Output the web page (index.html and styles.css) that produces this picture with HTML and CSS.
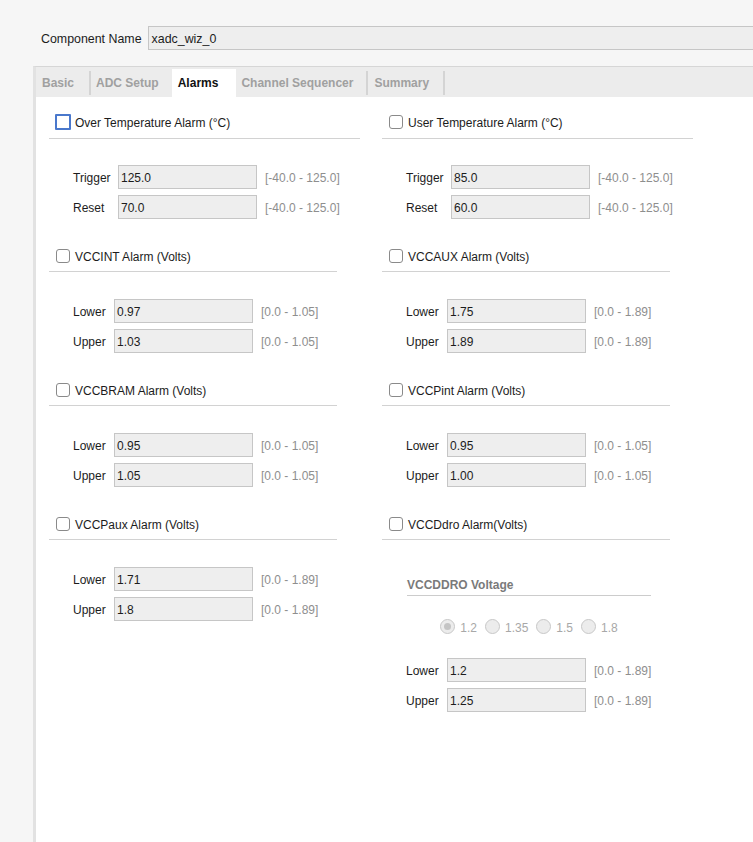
FILE: index.html
```html
<!DOCTYPE html>
<html>
<head>
<meta charset="utf-8">
<link rel="stylesheet" href="styles.css">
</head>
<body>
<div class="top">
  <span class="top-label">Component Name</span>
  <div class="top-input">xadc_wiz_0</div>
</div>
<div class="panel">
  <div class="tabs">
    <div class="tab">Basic</div>
    <div class="divider"></div>
    <div class="tab tab-adc">ADC Setup</div>
    <div class="tab tab-active">Alarms</div>
    <div class="tab tab-cs">Channel Sequencer</div>
    <div class="divider"></div>
    <div class="tab tab-sum">Summary</div>
    <div class="divider"></div>
  </div>
  <div class="content">
    <div class="sec">
      <div class="sec-head"><span class="cb cb-focus"></span><span class="htext">Over Temperature Alarm (°C)</span></div>
      <div class="sep sep-wide"></div>
      <div class="fields fields-temp">
        <div class="field"><span class="flabel">Trigger</span><div class="finput">125.0</div><span class="range">[-40.0 - 125.0]</span></div>
        <div class="field"><span class="flabel">Reset</span><div class="finput">70.0</div><span class="range">[-40.0 - 125.0]</span></div>
      </div>
    </div>
    <div class="sec">
      <div class="sec-head"><span class="cb"></span><span class="htext">User Temperature Alarm (°C)</span></div>
      <div class="sep sep-wide"></div>
      <div class="fields fields-temp">
        <div class="field"><span class="flabel">Trigger</span><div class="finput">85.0</div><span class="range">[-40.0 - 125.0]</span></div>
        <div class="field"><span class="flabel">Reset</span><div class="finput">60.0</div><span class="range">[-40.0 - 125.0]</span></div>
      </div>
    </div>

    <div class="sec">
      <div class="sec-head"><span class="cb"></span><span class="htext">VCCINT Alarm (Volts)</span></div>
      <div class="sep"></div>
      <div class="fields">
        <div class="field"><span class="flabel">Lower</span><div class="finput">0.97</div><span class="range">[0.0 - 1.05]</span></div>
        <div class="field"><span class="flabel">Upper</span><div class="finput">1.03</div><span class="range">[0.0 - 1.05]</span></div>
      </div>
    </div>
    <div class="sec">
      <div class="sec-head"><span class="cb"></span><span class="htext">VCCAUX Alarm (Volts)</span></div>
      <div class="sep"></div>
      <div class="fields">
        <div class="field"><span class="flabel">Lower</span><div class="finput">1.75</div><span class="range">[0.0 - 1.89]</span></div>
        <div class="field"><span class="flabel">Upper</span><div class="finput">1.89</div><span class="range">[0.0 - 1.89]</span></div>
      </div>
    </div>

    <div class="sec">
      <div class="sec-head"><span class="cb"></span><span class="htext">VCCBRAM Alarm (Volts)</span></div>
      <div class="sep"></div>
      <div class="fields">
        <div class="field"><span class="flabel">Lower</span><div class="finput">0.95</div><span class="range">[0.0 - 1.05]</span></div>
        <div class="field"><span class="flabel">Upper</span><div class="finput">1.05</div><span class="range">[0.0 - 1.05]</span></div>
      </div>
    </div>
    <div class="sec">
      <div class="sec-head"><span class="cb"></span><span class="htext">VCCPint Alarm (Volts)</span></div>
      <div class="sep"></div>
      <div class="fields">
        <div class="field"><span class="flabel">Lower</span><div class="finput">0.95</div><span class="range">[0.0 - 1.05]</span></div>
        <div class="field"><span class="flabel">Upper</span><div class="finput">1.00</div><span class="range">[0.0 - 1.05]</span></div>
      </div>
    </div>

    <div class="sec">
      <div class="sec-head"><span class="cb"></span><span class="htext">VCCPaux Alarm (Volts)</span></div>
      <div class="sep"></div>
      <div class="fields">
        <div class="field"><span class="flabel">Lower</span><div class="finput">1.71</div><span class="range">[0.0 - 1.89]</span></div>
        <div class="field"><span class="flabel">Upper</span><div class="finput">1.8</div><span class="range">[0.0 - 1.89]</span></div>
      </div>
    </div>
    <div class="sec">
      <div class="sec-head"><span class="cb"></span><span class="htext">VCCDdro Alarm(Volts)</span></div>
      <div class="sep"></div>
      <div class="sub">
        <div class="sub-title">VCCDDRO Voltage</div>
        <div class="radios">
          <span class="radio radio-on"></span><span class="rlabel">1.2</span>
          <span class="radio"></span><span class="rlabel">1.35</span>
          <span class="radio"></span><span class="rlabel">1.5</span>
          <span class="radio"></span><span class="rlabel">1.8</span>
        </div>
        <div class="fields fields-sub">
          <div class="field"><span class="flabel">Lower</span><div class="finput">1.2</div><span class="range">[0.0 - 1.89]</span></div>
          <div class="field"><span class="flabel">Upper</span><div class="finput">1.25</div><span class="range">[0.0 - 1.89]</span></div>
        </div>
      </div>
    </div>
  </div>
</div>
</body>
</html>
```

FILE: styles.css
```css
html, body {
  margin: 0;
  padding: 0;
}
body {
  background: #f6f6f6;
  font-family: "Liberation Sans", Arial, sans-serif;
  font-size: 12px;
  color: #1c1c1c;
  width: 753px;
  height: 842px;
  overflow: hidden;
}
.top {
  display: flex;
  align-items: center;
  gap: 6px;
  padding: 26px 0 0 41px;
}
.top-label {
  font-size: 12.4px;
  padding-top: 2px;
}
.top-input {
  flex: 1;
  height: 22px;
  line-height: 24px;
  background: #eeeeee;
  border: 1px solid #c6c6c6;
  border-right: none;
  padding-left: 3px;
  font-size: 12.4px;
}
.panel {
  margin: 16px 0 0 33px;
  border-left: 3px solid #e2e2e2;
  border-top: 1px solid #d6d6d6;
  background: #ffffff;
  height: 780px;
}
.tabs {
  display: flex;
  align-items: flex-end;
  height: 30px;
  background: #ececec;
}
.tab {
  height: 28px;
  line-height: 29px;
  padding: 0 15px 0 6px;
  font-weight: bold;
  color: #a0a0a0;
}
.tab-adc {
  padding-left: 5px;
  padding-right: 13px;
}
.tab-active {
  background: #ffffff;
  color: #111111;
  padding-right: 18px;
}
.tab-cs {
  padding-left: 5px;
  padding-right: 13px;
}
.tab-sum {
  padding-left: 6px;
  padding-right: 14px;
}
.divider {
  width: 2px;
  height: 24px;
  background: #d4d4d4;
  align-self: center;
  margin-top: 2px;
}
.content {
  display: grid;
  grid-template-columns: 333px 333px;
  padding: 15px 0 0 13px;
}
.sec {
  margin-bottom: 27px;
}
.sec-head {
  display: flex;
  align-items: center;
  gap: 5px;
  height: 20px;
  padding-left: 7px;
}
.htext {
  padding-top: 2px;
}
.cb {
  width: 12px;
  height: 12px;
  border: 1px solid #8a8a8a;
  border-radius: 3px;
  background: #ffffff;
  flex: none;
}
.cb-focus {
  width: 12px;
  height: 12px;
  border: 2px solid #4a78cc;
  border-radius: 1px;
  margin-left: -1px;
  margin-right: -1px;
}
.sep {
  height: 1px;
  background: #d2d2d2;
  margin-top: 5px;
  width: 288px;
}
.sep-wide {
  width: 311px;
  margin-top: 6px;
}
.fields {
  display: flex;
  flex-direction: column;
  gap: 6px;
  margin-top: 27px;
  padding-left: 24px;
}
.fields-temp {
  margin-top: 26px;
}
.field {
  display: flex;
  align-items: center;
  height: 24px;
}
.flabel {
  width: 41px;
  flex: none;
  padding-top: 2px;
}
.fields-temp .flabel {
  width: 45px;
}
.finput {
  width: 135px;
  height: 22px;
  line-height: 24px;
  background: #eeeeee;
  border: 1px solid #c6c6c6;
  padding-left: 2px;
  flex: none;
}
.range {
  margin-left: 8px;
  color: #8e8e8e;
  padding-top: 2px;
}
.sub {
  padding-left: 24px;
  margin-top: 37px;
}
.sub-title {
  width: 244px;
  margin-left: 1px;
  font-weight: bold;
  color: #7a7a7a;
  line-height: 16px;
  padding-bottom: 2px;
  border-bottom: 1px solid #cccccc;
}
.radios {
  width: 244px;
  margin-left: 1px;
  margin-top: 23px;
  display: flex;
  align-items: center;
  justify-content: center;
  height: 15px;
}
.radio {
  width: 15px;
  height: 15px;
  border: 1px solid #c8c8c8;
  border-radius: 50%;
  background: #ececec;
  box-sizing: border-box;
  flex: none;
  position: relative;
}
.radio-on::after {
  content: "";
  position: absolute;
  left: 3px;
  top: 3px;
  width: 7px;
  height: 7px;
  border-radius: 50%;
  background: #c4c4c4;
}
.rlabel {
  color: #a8a8a8;
  margin-left: 5px;
  margin-right: 8px;
  padding-top: 2px;
}
.rlabel:last-child {
  margin-right: 0;
}
.fields-sub {
  padding-left: 0;
  margin-top: 24px;
}
```
